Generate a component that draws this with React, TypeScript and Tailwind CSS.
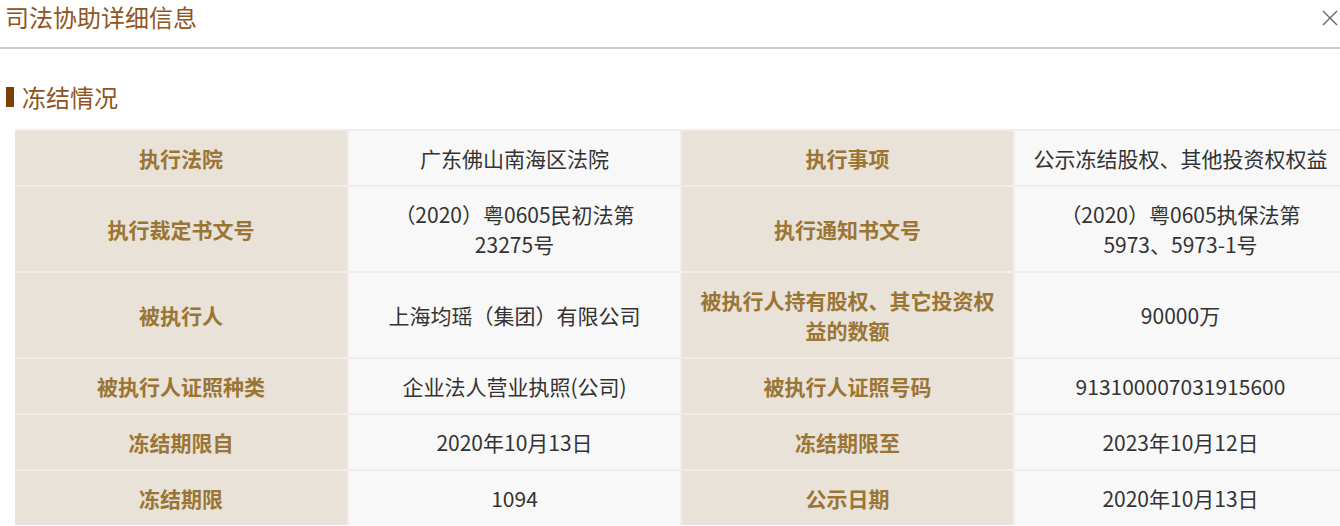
import React from "react";

const rows: [string, React.ReactNode, string, React.ReactNode][] = [
  ["执行法院", "广东佛山南海区法院", "执行事项", "公示冻结股权、其他投资权权益"],
  [
    "执行裁定书文号",
    <>
      （2020）粤0605民初法第
      <br />
      23275号
    </>,
    "执行通知书文号",
    <>
      （2020）粤0605执保法第
      <br />
      5973、5973-1号
    </>,
  ],
  ["被执行人", "上海均瑶（集团）有限公司", "被执行人持有股权、其它投资权益的数额", "90000万"],
  ["被执行人证照种类", "企业法人营业执照(公司)", "被执行人证照号码", "913100007031915600"],
  ["冻结期限自", "2020年10月13日", "冻结期限至", "2023年10月12日"],
  ["冻结期限", "1094", "公示日期", "2020年10月13日"],
];

function Label({ children }: { children: React.ReactNode }) {
  return (
    <div className="bg-[#e8e2d8] text-[#9b7533] font-bold text-[21px] leading-[30px] px-[12px] py-[12px] flex items-center justify-center text-center">
      {children}
    </div>
  );
}

function Value({ children }: { children: React.ReactNode }) {
  return (
    <div className="bg-[#f8f8f8] text-[#333333] text-[21px] leading-[30px] px-[12px] py-[12px] flex items-center justify-center text-center">
      <div>{children}</div>
    </div>
  );
}

export default function App() {
  return (
    <div
      className="w-[1340px] h-[526px] overflow-hidden bg-white"
      style={{ fontFamily: '"Noto Sans CJK SC", "Noto Sans", sans-serif' }}
    >
      <div className="h-[47px] flex items-start justify-between pl-[5px] pr-[2px]">
        <div className="text-[24px] leading-[34px] text-[#8f5522]">司法协助详细信息</div>
        <svg width="16" height="16" viewBox="0 0 16 16" className="mt-[10px]">
          <path d="M1 1 L15 15 M15 1 L1 15" stroke="#666" strokeWidth="1.4" fill="none" />
        </svg>
      </div>
      <div className="h-[2px] bg-[#cccccc]" />
      <div className="mt-[32px] h-[32px] flex items-center pl-[6px] gap-[8px]">
        <div className="w-[8px] h-[20px] bg-[#7f3f00]" />
        <div className="text-[24px] leading-[32px] text-[#8f5522]">冻结情况</div>
      </div>
      <div className="mt-[16px] ml-[15px] w-[1331px] bg-[#f1eeea] pt-[2px] grid grid-cols-[332px_331px_331px_331px] gap-[2px]">
        {rows.map((r, i) => (
          <React.Fragment key={i}>
            <Label>{r[0]}</Label>
            <Value>{r[1]}</Value>
            <Label>{r[2]}</Label>
            <Value>{r[3]}</Value>
          </React.Fragment>
        ))}
      </div>
    </div>
  );
}
